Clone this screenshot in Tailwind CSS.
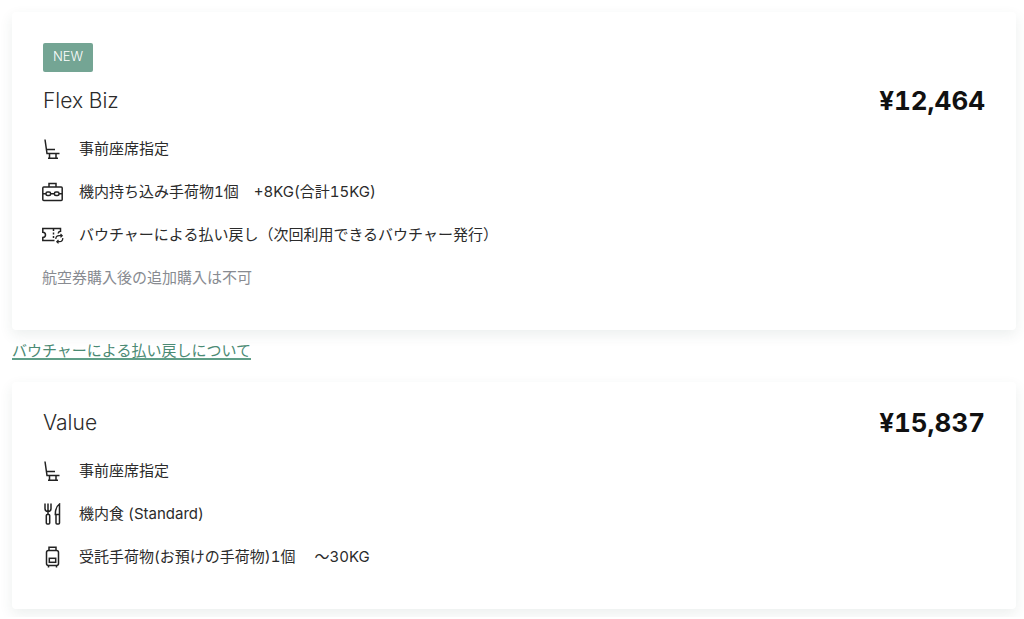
<!DOCTYPE html>
<html lang="ja">
<head>
    <meta charset="UTF-8">
    <meta name="viewport" content="width=device-width, initial-scale=1.0">
    <title>運賃オプション</title>
    <script src="https://cdn.jsdelivr.net/npm/@tailwindcss/browser@4"></script>
</head>
<body class="bg-white text-[#2b2b2b] font-['Inter','Noto_Sans_CJK_JP',sans-serif] tabular-nums">
    <!-- Shared icon -->
    <svg class="hidden">
        <symbol id="icon-seat" viewBox="0 0 22 22">
            <path d="M3 1.5 5 15.5H17.500M4.500 11.500H13M7.500 16v4M14 16v4M6 20.300h10" />
        </symbol>
    </svg>

    <main class="pl-3 pr-2 pt-3 pb-2">
        <!-- Flex Biz -->
        <section class="rounded-sm bg-white px-[31px] pt-[31px] pb-[41px] shadow-[0_5px_14px_rgba(40,80,70,0.09)]">
            <span class="block w-fit rounded-xs bg-[#74a594] px-[10px] pb-[3px] text-[13px] leading-[26px] font-light text-white mb-[19px]">NEW</span>
            <div class="flex items-center justify-between leading-5 mb-[26px]">
                <h2 class="text-[21px] leading-5 font-light">Flex Biz</h2>
                <p class="text-[26px] leading-5 font-bold text-[#111]">¥12,464</p>
            </div>
            <ul class="-ml-px flex flex-col gap-5 text-[15px] leading-[23px]">
                <li class="flex items-center gap-[15px]">
                    <svg class="size-[22px] shrink-0 fill-none stroke-[#222] stroke-[1.5]" aria-hidden="true"><use href="#icon-seat" /></svg>
                    <span>事前座席指定</span>
                </li>
                <li class="flex items-center gap-[15px]">
                    <svg class="size-[22px] shrink-0 fill-none stroke-[#222] stroke-[1.5]" viewBox="0 0 22 22" aria-hidden="true">
                        <rect x="0.8" y="6" width="19.4" height="13.5" rx="1" />
                        <path d="M7 6V2.5h7V6M1 12.7h3M8.8 12.7h3.4M17 12.7h3" />
                        <rect x="4" y="11" width="4.6" height="3.6" rx="1.5" />
                        <rect x="12.4" y="11" width="4.6" height="3.6" rx="1.5" />
                    </svg>
                    <span>機内持ち込み手荷物1個　+8KG(合計15KG)</span>
                </li>
                <li class="flex items-center gap-[15px]">
                    <svg class="size-[22px] shrink-0 fill-none stroke-[#222] stroke-[1.5]" viewBox="0 0 22 22" aria-hidden="true">
                        <path d="M12.500 16.500H.8v-3c1.800-.2 2.700-1.200 2.700-2.500S2.600 8.500.8 8.300V4.500H18.500V7.300c-1.600.4-2.300 1.200-2.300 2.300" />
                        <path d="M11.500 5v10" stroke-dasharray="2 1.500" />
                        <path d="M13.800 15c0-2 1.300-3.300 3.300-3.300h2.700M18.500 10l1.700 1.700-1.700 1.700M20.800 14c0 2-1.300 3.700-3.300 3.700h-2.800M16.500 16l-1.700 1.700 1.700 1.700" stroke-width="1.200" />
                    </svg>
                    <span>バウチャーによる払い戻し（次回利用できるバウチャー発行）</span>
                </li>
                <li class="text-[#888b91]">航空券購入後の追加購入は不可</li>
            </ul>
        </section>

        <div class="flex pt-[13px] pb-[22px]">
            <a href="#" class="border-b-2 border-[#5f9e87] text-[15px] leading-[15px] text-[#4b8a74]">バウチャーによる払い戻しについて</a>
        </div>

        <!-- Value -->
        <section class="rounded-sm bg-white px-[31px] pt-[31px] pb-[41px] shadow-[0_5px_14px_rgba(40,80,70,0.09)]">
            <div class="flex items-center justify-between leading-5 mb-[26px]">
                <h2 class="text-[21px] leading-5 font-light">Value</h2>
                <p class="text-[26px] leading-5 font-bold text-[#111]">¥15,837</p>
            </div>
            <ul class="-ml-px flex flex-col gap-5 text-[15px] leading-[23px]">
                <li class="flex items-center gap-[15px]">
                    <svg class="size-[22px] shrink-0 fill-none stroke-[#222] stroke-[1.5]" aria-hidden="true"><use href="#icon-seat" /></svg>
                    <span>事前座席指定</span>
                </li>
                <li class="flex items-center gap-[15px]">
                    <svg class="size-[22px] shrink-0 fill-none stroke-[#222] stroke-[1.5]" viewBox="0 0 22 22" aria-hidden="true">
                        <path d="M3 .5v5c0 2 1 3 3 3s3-1 3-3v-5M6 .5v10.500" />
                        <rect x="4.300" y="11.500" width="3.400" height="9.500" rx="1" />
                        <path d="M13.300 11.500c0-5 1.300-8.500 4.200-10.500v10.500zM14 11.500h3.500V20q0 1-1 1H15q-1 0-1-1z" />
                    </svg>
                    <span>機内食 (Standard)</span>
                </li>
                <li class="flex items-center gap-[15px]">
                    <svg class="size-[22px] shrink-0 fill-none stroke-[#222] stroke-[1.5]" viewBox="0 0 22 22" aria-hidden="true">
                        <path d="M7 4.500V1.300h7v3.200M6.500 19.500V21.500M14.500 19.500V21.500" />
                        <rect x="4.500" y="4.500" width="12" height="15" rx="2" />
                        <rect x="7.300" y="12.300" width="6.400" height="4" />
                    </svg>
                    <span>受託手荷物(お預けの手荷物)1個　 ～30KG</span>
                </li>
            </ul>
        </section>
    </main>
</body>
</html>
